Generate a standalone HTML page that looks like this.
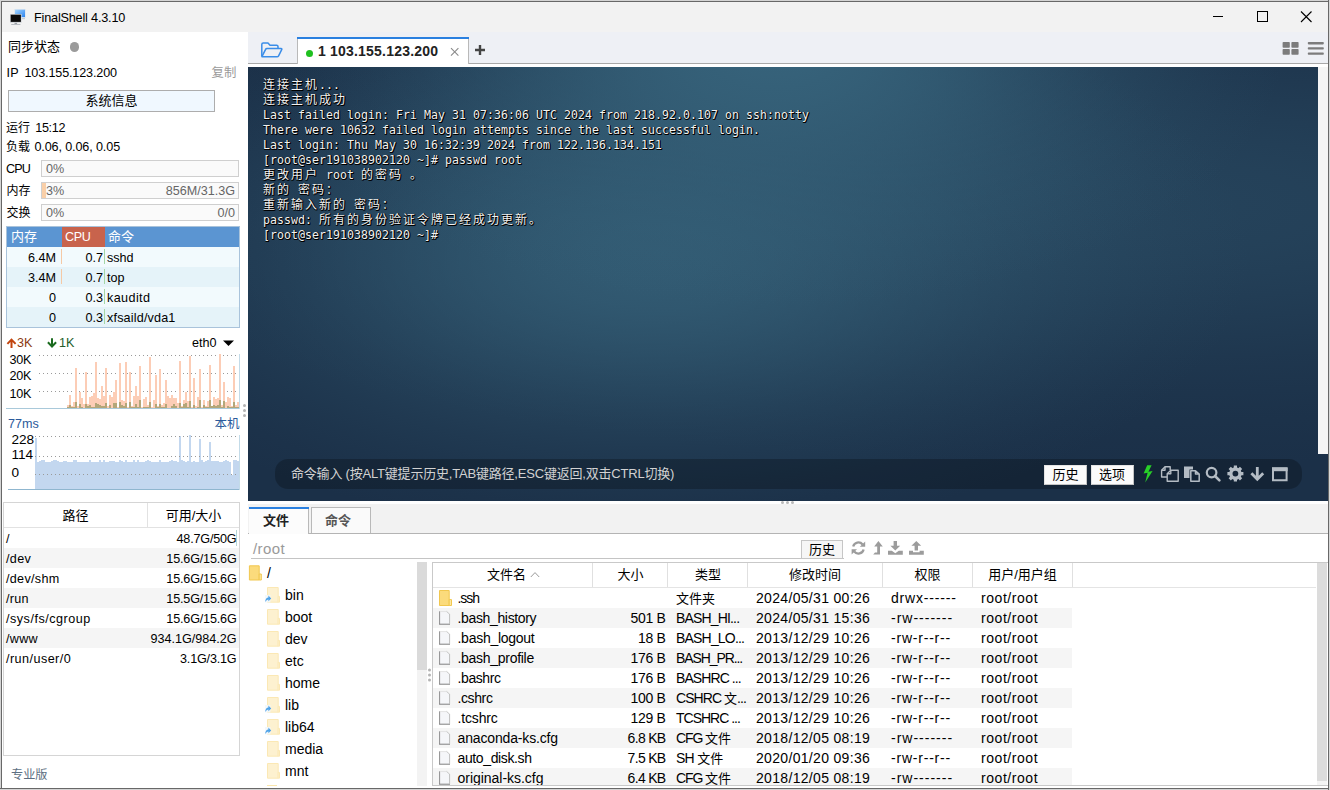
<!DOCTYPE html>
<html lang="zh-CN">
<head>
<meta charset="utf-8">
<title>FinalShell 4.3.10</title>
<style>
*{box-sizing:border-box;margin:0;padding:0}
html,body{width:1330px;height:790px;overflow:hidden;background:#fff}
body{font-family:"Liberation Sans","Noto Sans CJK SC",sans-serif;font-size:13px;color:#000;position:relative}
.a{position:absolute}
.t{position:absolute;white-space:nowrap;height:20px;line-height:20px;font-size:12.6px}
.z{font-size:13px}
.r{text-align:right}
.c{text-align:center}
.g{color:#666}
svg{position:absolute;overflow:visible}
/* frame */
#frame{left:0;top:0;width:1330px;height:790px;background:#d4d4d4}
#frame2{left:1px;top:1px;width:1328px;height:788px;background:#686868}
#win{left:2px;top:2px;width:1326px;height:786px;background:#fff}
#title{left:2px;top:2px;width:1326px;height:30px;background:#f2f2f2}
/* left */
.bar{position:absolute;left:41px;width:198px;height:17px;border:1px solid #cfcfcf;background:#fafafa}
.prow{position:absolute;left:7px;width:232px;height:20px}
.drow{position:absolute;left:4px;width:235px;height:20px}
/* terminal */
#term{left:248px;top:67px;width:1080px;height:434px;background:#21425d;overflow:hidden}
#term{background:#1b3048}
#tbg1{left:0;top:0;width:1080px;height:434px;background:
radial-gradient(ellipse 508px 258px at 528px -17px,rgba(54,98,122,1.000) 0%,rgba(54,98,122,0.973) 10%,rgba(54,98,122,0.896) 20%,rgba(54,98,122,0.780) 30%,rgba(54,98,122,0.641) 40%,rgba(54,98,122,0.494) 50%,rgba(54,98,122,0.353) 60%,rgba(54,98,122,0.231) 70%,rgba(54,98,122,0.131) 80%,rgba(54,98,122,0.054) 90%,rgba(54,98,122,0.000) 100%),
radial-gradient(ellipse 599px 282px at 403px 188px,rgba(54,98,122,0.827) 0%,rgba(54,98,122,0.804) 10%,rgba(54,98,122,0.741) 20%,rgba(54,98,122,0.645) 30%,rgba(54,98,122,0.530) 40%,rgba(54,98,122,0.408) 50%,rgba(54,98,122,0.292) 60%,rgba(54,98,122,0.191) 70%,rgba(54,98,122,0.108) 80%,rgba(54,98,122,0.045) 90%,rgba(54,98,122,0.000) 100%),
radial-gradient(ellipse 1075px 261px at 877px 140px,rgba(54,98,122,0.371) 0%,rgba(54,98,122,0.361) 10%,rgba(54,98,122,0.333) 20%,rgba(54,98,122,0.290) 30%,rgba(54,98,122,0.238) 40%,rgba(54,98,122,0.183) 50%,rgba(54,98,122,0.131) 60%,rgba(54,98,122,0.086) 70%,rgba(54,98,122,0.048) 80%,rgba(54,98,122,0.020) 90%,rgba(54,98,122,0.000) 100%)}
#termtext{left:15px;top:11px;font-family:"DejaVu Sans Mono","Liberation Mono","Noto Sans CJK SC",monospace;font-size:11.63px;line-height:15px;color:#f2f2f2;white-space:pre;text-shadow:1px 1px 0 #000,0 1px 0 #000,1px 0 0 #000}
#termtext .ln{height:15px;line-height:15px}
#termtext .cj{font-family:"Noto Sans CJK SC",sans-serif;font-size:12px;letter-spacing:2px;line-height:0;position:relative;top:0px}
.frow{position:absolute;left:433px;width:639px;height:20px}
.ft{position:absolute;white-space:nowrap;height:20px;line-height:20px;font-size:14px}
.ftp i{font-style:normal;font-size:13px;letter-spacing:0}
#fn0{letter-spacing:-1.02px}
#fn1{letter-spacing:-0.35px}
#fn2{letter-spacing:-0.27px}
#fn3{letter-spacing:-0.29px}
#fn4{letter-spacing:-0.40px}
#fn5{letter-spacing:-0.39px}
#fn6{letter-spacing:-0.15px}
#fn7{letter-spacing:-0.15px}
#fn8{letter-spacing:-0.38px}
#fn9{letter-spacing:-0.03px}
#fs1{letter-spacing:-0.34px}
#fs2{letter-spacing:-0.35px}
#fs3{letter-spacing:-0.34px}
#fs4{letter-spacing:-0.34px}
#fs5{letter-spacing:-0.34px}
#fs6{letter-spacing:-0.34px}
#fs7{letter-spacing:-0.69px}
#fs8{letter-spacing:-0.69px}
#fs9{letter-spacing:-0.69px}
#ftp0{letter-spacing:-0.62px}
#ftp1{letter-spacing:-0.84px}
#ftp2{letter-spacing:-0.81px}
#ftp3{letter-spacing:-1.09px}
#ftp4{letter-spacing:-0.92px}
#ftp5{letter-spacing:-0.94px}
#ftp6{letter-spacing:-1.01px}
#ftp7{letter-spacing:-1.09px}
#ftp8{letter-spacing:-0.72px}
#ftp9{letter-spacing:-1.09px}
#fd0{letter-spacing:0.32px}
#fd1{letter-spacing:0.32px}
#fd2{letter-spacing:0.32px}
#fd3{letter-spacing:0.32px}
#fd4{letter-spacing:0.32px}
#fd5{letter-spacing:0.32px}
#fd6{letter-spacing:0.32px}
#fd7{letter-spacing:0.32px}
#fd8{letter-spacing:0.32px}
#fd9{letter-spacing:0.32px}
#fp0{letter-spacing:0.81px}
#fp1{letter-spacing:1.00px}
#fp2{letter-spacing:0.79px}
#fp3{letter-spacing:0.79px}
#fp4{letter-spacing:0.79px}
#fp5{letter-spacing:0.79px}
#fp6{letter-spacing:0.79px}
#fp7{letter-spacing:1.00px}
#fp8{letter-spacing:0.79px}
#fp9{letter-spacing:1.00px}
#fu0{letter-spacing:0.55px}
#fu1{letter-spacing:0.55px}
#fu2{letter-spacing:0.55px}
#fu3{letter-spacing:0.55px}
#fu4{letter-spacing:0.55px}
#fu5{letter-spacing:0.55px}
#fu6{letter-spacing:0.55px}
#fu7{letter-spacing:0.55px}
#fu8{letter-spacing:0.55px}
#fu9{letter-spacing:0.55px}
.tree{position:absolute;white-space:nowrap;height:22px;line-height:22px;font-size:14px}
</style>
</head>
<body>
<div class="a" id="frame"></div>
<div class="a" id="frame2"></div>
<div class="a" id="win"></div>
<div class="a" id="title"></div>

<!-- TITLE -->
<svg style="left:9px;top:8px" width="18" height="18" viewBox="0 0 18 18">
<defs><linearGradient id="mb" x1="0" y1="0" x2="1" y2="1"><stop offset="0" stop-color="#a5d6ff"/><stop offset="1" stop-color="#2b83ee"/></linearGradient></defs>
<rect x="5.2" y="1" width="11.6" height="8.8" fill="#dfe6ee"/>
<rect x="6" y="1.7" width="10" height="7.4" fill="url(#mb)"/>
<rect x="13" y="10" width="3" height="1.2" fill="#c9ced4"/>
<rect x="1" y="6" width="11.6" height="8.8" fill="#cfd3d8"/>
<rect x="1.7" y="6.7" width="10.2" height="7.2" fill="#0a0a0a"/>
<rect x="5.5" y="14.8" width="2.6" height="1.4" fill="#9aa0a6"/>
<rect x="2.2" y="16" width="9.2" height="1" fill="#b8bcc2"/>
</svg>
<div class="t" id="ttl" style="left:34px;top:7.7px;font-size:12.7px;letter-spacing:-.2px">FinalShell 4.3.10</div>
<svg style="left:1213px;top:10px" width="100" height="14" viewBox="0 0 100 14">
<path d="M0 6.5H10" stroke="#000" stroke-width="1" fill="none"/>
<rect x="44.5" y="1.5" width="10" height="10" stroke="#000" stroke-width="1" fill="none"/>
<path d="M88 1.5L98.5 12M98.5 1.5L88 12" stroke="#000" stroke-width="1.1" fill="none"/>
</svg>

<!-- LEFT -->
<div class="t z" id="l_sync" style="left:8px;top:36.5px">同步状态</div>
<div class="a" style="left:69.7px;top:42.2px;width:9.6px;height:9.6px;border-radius:5px;background:#9b9b9b"></div>
<div class="t" id="l_ip" style="left:6.5px;top:62.5px"><span style="letter-spacing:.3px">IP</span><span style="margin-left:5.4px;letter-spacing:-.13px">103.155.123.200</span></div>
<div class="t z" id="l_copy" style="left:211.5px;top:62.5px;color:#9a9a9a;font-size:12.4px">复制</div>
<div class="a c z" id="l_btn" style="left:8px;top:90px;width:207px;height:22px;border:1px solid #adadad;background:#f0f8ff;line-height:20px">系统信息</div>
<div class="t" id="l_run" style="left:6px;top:118px"><span style="font-size:12px">运行</span><span style="margin-left:5.3px;letter-spacing:-.35px">15:12</span></div>
<div class="t" id="l_load" style="left:6px;top:136.5px"><span style="font-size:12px">负载</span><span style="margin-left:4.4px;letter-spacing:-.12px">0.06, 0.06, 0.05</span></div>
<div class="t" id="l_cpu" style="left:6px;top:158.5px;letter-spacing:-.85px">CPU</div>
<div class="bar" style="top:160px"></div>
<div class="t g" style="left:46px;top:158.5px">0%</div>
<div class="t" id="l_mem" style="left:6.5px;top:180.5px;font-size:12px">内存</div>
<div class="bar" style="top:182px"><div class="a" style="left:0;top:0;width:4px;height:15px;background:#f9cfa8"></div></div>
<div class="t g" style="left:46px;top:180.5px">3%</div>
<div class="t g r" id="l_memv" style="left:135px;width:100px;top:180.5px">856M/31.3G</div>
<div class="t" id="l_swap" style="left:6.5px;top:202.5px;font-size:12px">交换</div>
<div class="bar" style="top:204px"></div>
<div class="t g" style="left:46px;top:202.5px">0%</div>
<div class="t g r" style="left:135px;width:100px;top:202.5px">0/0</div>

<!-- process table -->
<div class="a" style="left:6px;top:226px;width:234px;height:102px;background:#a9c3db"></div>
<div class="prow" style="top:227px;background:#5b95d2"></div>
<div class="a" style="left:62px;top:227px;width:43px;height:20px;background:#c8634c"></div>
<div class="prow" style="top:247px;background:#f2fafd"></div>
<div class="prow" style="top:267px;background:#e5f3f9"></div>
<div class="prow" style="top:287px;background:#f2fafd"></div>
<div class="prow" style="top:307px;background:#e5f3f9"></div>
<div class="t z" style="left:11px;top:227px;color:#fff">内存</div>
<div class="t" style="left:65px;top:227px;color:#fff;letter-spacing:-.4px">CPU</div>
<div class="t z" style="left:108px;top:227px;color:#fff">命令</div>
<div class="a" style="left:61px;top:249px;width:1px;height:15px;background:#f5c9a5"></div>
<div class="a" style="left:61px;top:269px;width:1px;height:15px;background:#f5c9a5"></div>
<div class="a" style="left:104px;top:249px;width:1px;height:15px;background:#a5d6a7"></div><div class="a" style="left:104px;top:269px;width:1px;height:15px;background:#a5d6a7"></div><div class="a" style="left:104px;top:289px;width:1px;height:15px;background:#a5d6a7"></div><div class="a" style="left:104px;top:309px;width:1px;height:15px;background:#a5d6a7"></div>
<div class="t r" style="left:6px;width:50px;top:247.5px">6.4M</div><div class="t r" style="left:53px;width:50px;top:247.5px">0.7</div><div class="t" style="left:107px;top:247.5px">sshd</div>
<div class="t r" style="left:6px;width:50px;top:267.5px">3.4M</div><div class="t r" style="left:53px;width:50px;top:267.5px">0.7</div><div class="t" style="left:107px;top:267.5px">top</div>
<div class="t r" style="left:6px;width:50px;top:287.5px">0</div><div class="t r" style="left:53px;width:50px;top:287.5px">0.3</div><div class="t" style="left:107px;top:287.5px;letter-spacing:.4px">kauditd</div>
<div class="t r" style="left:6px;width:50px;top:307.5px">0</div><div class="t r" style="left:53px;width:50px;top:307.5px">0.3</div><div class="t" id="l_xfs" style="left:107px;top:307.5px;letter-spacing:.17px">xfsaild/vda1</div>

<!-- network -->
<svg style="left:0;top:336px" width="247" height="14" viewBox="0 0 247 14">
<path d="M11.5 2.2L16.3 7.2L14.9 8.6L12.5 6.1V12H10.5V6.1L8.1 8.6L6.7 7.2Z" fill="#c1440e"/>
<path d="M52 12L47.2 7L48.6 5.6L51 8.1V2.2H53V8.1L55.4 5.6L56.8 7Z" fill="#1b6b1f"/>
<path d="M223 4.5H234L228.5 10Z" fill="#000"/>
</svg>
<div class="t" id="l_up" style="left:17px;top:333px;color:#8b3a12">3K</div>
<div class="t" id="l_dn" style="left:59px;top:333px;color:#245c2a">1K</div>
<div class="t" id="l_eth" style="left:192px;top:333px">eth0</div>
<div class="t" id="l_30k" style="left:9.5px;top:350px;letter-spacing:-.3px">30K</div>
<div class="t" style="left:9.5px;top:366px;letter-spacing:-.3px">20K</div>
<div class="t" style="left:9.5px;top:384px;letter-spacing:-.3px">10K</div>
<svg style="left:0;top:350px" width="247" height="62" viewBox="0 0 247 62" shape-rendering="crispEdges">
<line x1="39" y1="5.5" x2="238" y2="5.5" stroke="#9a9a9a" stroke-width="1" stroke-dasharray="1 3"/><line x1="39" y1="23.5" x2="238" y2="23.5" stroke="#9a9a9a" stroke-width="1" stroke-dasharray="1 3"/><line x1="39" y1="41.5" x2="238" y2="41.5" stroke="#9a9a9a" stroke-width="1" stroke-dasharray="1 3"/>
<rect x="67" y="55" width="2" height="4" fill="#fccdb6"/><rect x="69" y="45" width="2" height="14" fill="#fccdb6"/><rect x="71" y="56" width="2" height="3" fill="#fccdb6"/><rect x="73" y="52" width="2" height="7" fill="#fccdb6"/><rect x="75" y="18" width="2" height="41" fill="#fccdb6"/><rect x="77" y="56" width="2" height="3" fill="#fccdb6"/><rect x="79" y="42" width="2" height="17" fill="#fccdb6"/><rect x="81" y="48" width="2" height="11" fill="#fccdb6"/><rect x="83" y="54" width="2" height="5" fill="#fccdb6"/><rect x="85" y="22" width="2" height="37" fill="#fccdb6"/><rect x="87" y="54" width="2" height="5" fill="#fccdb6"/><rect x="89" y="47" width="2" height="12" fill="#fccdb6"/><rect x="91" y="46" width="2" height="13" fill="#fccdb6"/><rect x="93" y="43" width="2" height="16" fill="#fccdb6"/><rect x="95" y="12" width="2" height="47" fill="#fccdb6"/><rect x="97" y="48" width="2" height="11" fill="#fccdb6"/><rect x="99" y="49" width="2" height="10" fill="#fccdb6"/><rect x="101" y="36" width="2" height="23" fill="#fccdb6"/><rect x="103" y="46" width="2" height="13" fill="#fccdb6"/><rect x="105" y="18" width="2" height="41" fill="#fccdb6"/><rect x="107" y="56" width="2" height="3" fill="#fccdb6"/><rect x="109" y="45" width="2" height="14" fill="#fccdb6"/><rect x="111" y="47" width="2" height="12" fill="#fccdb6"/><rect x="113" y="42" width="2" height="17" fill="#fccdb6"/><rect x="115" y="30" width="2" height="29" fill="#fccdb6"/><rect x="117" y="57" width="2" height="2" fill="#fccdb6"/><rect x="119" y="13" width="2" height="46" fill="#fccdb6"/><rect x="121" y="50" width="2" height="9" fill="#fccdb6"/><rect x="123" y="51" width="2" height="8" fill="#fccdb6"/><rect x="125" y="12" width="2" height="47" fill="#fccdb6"/><rect x="127" y="57" width="2" height="2" fill="#fccdb6"/><rect x="129" y="22" width="2" height="37" fill="#fccdb6"/><rect x="131" y="56" width="2" height="3" fill="#fccdb6"/><rect x="133" y="46" width="2" height="13" fill="#fccdb6"/><rect x="135" y="36" width="2" height="23" fill="#fccdb6"/><rect x="137" y="46" width="2" height="13" fill="#fccdb6"/><rect x="139" y="16" width="2" height="43" fill="#fccdb6"/><rect x="141" y="57" width="2" height="2" fill="#fccdb6"/><rect x="143" y="49" width="2" height="10" fill="#fccdb6"/><rect x="145" y="47" width="2" height="12" fill="#fccdb6"/><rect x="147" y="55" width="2" height="4" fill="#fccdb6"/><rect x="149" y="7" width="2" height="52" fill="#fccdb6"/><rect x="151" y="57" width="2" height="2" fill="#fccdb6"/><rect x="153" y="50" width="2" height="9" fill="#fccdb6"/><rect x="155" y="25" width="2" height="34" fill="#fccdb6"/><rect x="157" y="56" width="2" height="3" fill="#fccdb6"/><rect x="159" y="19" width="2" height="40" fill="#fccdb6"/><rect x="161" y="55" width="2" height="4" fill="#fccdb6"/><rect x="163" y="53" width="2" height="6" fill="#fccdb6"/><rect x="165" y="30" width="2" height="29" fill="#fccdb6"/><rect x="167" y="46" width="2" height="13" fill="#fccdb6"/><rect x="169" y="48" width="2" height="11" fill="#fccdb6"/><rect x="171" y="45" width="2" height="14" fill="#fccdb6"/><rect x="173" y="48" width="2" height="11" fill="#fccdb6"/><rect x="175" y="48" width="2" height="11" fill="#fccdb6"/><rect x="177" y="53" width="2" height="6" fill="#fccdb6"/><rect x="179" y="11" width="2" height="48" fill="#fccdb6"/><rect x="181" y="56" width="2" height="3" fill="#fccdb6"/><rect x="183" y="50" width="2" height="9" fill="#fccdb6"/><rect x="185" y="42" width="2" height="17" fill="#fccdb6"/><rect x="187" y="51" width="2" height="8" fill="#fccdb6"/><rect x="189" y="6" width="2" height="53" fill="#fccdb6"/><rect x="191" y="57" width="2" height="2" fill="#fccdb6"/><rect x="193" y="28" width="2" height="31" fill="#fccdb6"/><rect x="195" y="56" width="2" height="3" fill="#fccdb6"/><rect x="197" y="47" width="2" height="12" fill="#fccdb6"/><rect x="199" y="19" width="2" height="40" fill="#fccdb6"/><rect x="201" y="57" width="2" height="2" fill="#fccdb6"/><rect x="203" y="50" width="2" height="9" fill="#fccdb6"/><rect x="205" y="56" width="2" height="3" fill="#fccdb6"/><rect x="207" y="51" width="2" height="8" fill="#fccdb6"/><rect x="209" y="15" width="2" height="44" fill="#fccdb6"/><rect x="211" y="56" width="2" height="3" fill="#fccdb6"/><rect x="213" y="47" width="2" height="12" fill="#fccdb6"/><rect x="215" y="49" width="2" height="10" fill="#fccdb6"/><rect x="217" y="48" width="2" height="11" fill="#fccdb6"/><rect x="219" y="4" width="2" height="55" fill="#fccdb6"/><rect x="221" y="55" width="2" height="4" fill="#fccdb6"/><rect x="223" y="32" width="2" height="27" fill="#fccdb6"/><rect x="225" y="52" width="2" height="7" fill="#fccdb6"/><rect x="227" y="47" width="2" height="12" fill="#fccdb6"/><rect x="229" y="48" width="2" height="11" fill="#fccdb6"/><rect x="231" y="56" width="2" height="3" fill="#fccdb6"/><rect x="233" y="16" width="2" height="43" fill="#fccdb6"/><rect x="235" y="55" width="2" height="4" fill="#fccdb6"/><rect x="237" y="52" width="2" height="7" fill="#fccdb6"/><rect x="67" y="57" width="2" height="2" fill="#b3a679"/><rect x="69" y="55" width="2" height="4" fill="#b3a679"/><rect x="71" y="57" width="2" height="2" fill="#b3a679"/><rect x="73" y="57" width="2" height="2" fill="#b3a679"/><rect x="75" y="52" width="2" height="7" fill="#b3a679"/><rect x="77" y="58" width="2" height="1" fill="#b3a679"/><rect x="79" y="54" width="2" height="5" fill="#b3a679"/><rect x="81" y="57" width="2" height="2" fill="#b3a679"/><rect x="83" y="58" width="2" height="1" fill="#b3a679"/><rect x="85" y="54" width="2" height="5" fill="#b3a679"/><rect x="87" y="56" width="2" height="3" fill="#b3a679"/><rect x="89" y="55" width="2" height="4" fill="#b3a679"/><rect x="91" y="57" width="2" height="2" fill="#b3a679"/><rect x="93" y="57" width="2" height="2" fill="#b3a679"/><rect x="95" y="53" width="2" height="6" fill="#b3a679"/><rect x="97" y="54" width="2" height="5" fill="#b3a679"/><rect x="99" y="55" width="2" height="4" fill="#b3a679"/><rect x="101" y="56" width="2" height="3" fill="#b3a679"/><rect x="103" y="56" width="2" height="3" fill="#b3a679"/><rect x="105" y="53" width="2" height="6" fill="#b3a679"/><rect x="107" y="58" width="2" height="1" fill="#b3a679"/><rect x="109" y="55" width="2" height="4" fill="#b3a679"/><rect x="111" y="58" width="2" height="1" fill="#b3a679"/><rect x="113" y="53" width="2" height="6" fill="#b3a679"/><rect x="115" y="53" width="2" height="6" fill="#b3a679"/><rect x="117" y="58" width="2" height="1" fill="#b3a679"/><rect x="119" y="52" width="2" height="7" fill="#b3a679"/><rect x="121" y="55" width="2" height="4" fill="#b3a679"/><rect x="123" y="56" width="2" height="3" fill="#b3a679"/><rect x="125" y="53" width="2" height="6" fill="#b3a679"/><rect x="127" y="58" width="2" height="1" fill="#b3a679"/><rect x="129" y="52" width="2" height="7" fill="#b3a679"/><rect x="131" y="57" width="2" height="2" fill="#b3a679"/><rect x="133" y="57" width="2" height="2" fill="#b3a679"/><rect x="135" y="54" width="2" height="5" fill="#b3a679"/><rect x="137" y="57" width="2" height="2" fill="#b3a679"/><rect x="139" y="50" width="2" height="9" fill="#b3a679"/><rect x="141" y="58" width="2" height="1" fill="#b3a679"/><rect x="143" y="57" width="2" height="2" fill="#b3a679"/><rect x="145" y="57" width="2" height="2" fill="#b3a679"/><rect x="147" y="57" width="2" height="2" fill="#b3a679"/><rect x="149" y="52" width="2" height="7" fill="#b3a679"/><rect x="151" y="58" width="2" height="1" fill="#b3a679"/><rect x="153" y="58" width="2" height="1" fill="#b3a679"/><rect x="155" y="54" width="2" height="5" fill="#b3a679"/><rect x="157" y="57" width="2" height="2" fill="#b3a679"/><rect x="159" y="54" width="2" height="5" fill="#b3a679"/><rect x="161" y="57" width="2" height="2" fill="#b3a679"/><rect x="163" y="57" width="2" height="2" fill="#b3a679"/><rect x="165" y="54" width="2" height="5" fill="#b3a679"/><rect x="167" y="58" width="2" height="1" fill="#b3a679"/><rect x="169" y="58" width="2" height="1" fill="#b3a679"/><rect x="171" y="56" width="2" height="3" fill="#b3a679"/><rect x="173" y="54" width="2" height="5" fill="#b3a679"/><rect x="175" y="56" width="2" height="3" fill="#b3a679"/><rect x="177" y="58" width="2" height="1" fill="#b3a679"/><rect x="179" y="53" width="2" height="6" fill="#b3a679"/><rect x="181" y="57" width="2" height="2" fill="#b3a679"/><rect x="183" y="54" width="2" height="5" fill="#b3a679"/><rect x="185" y="53" width="2" height="6" fill="#b3a679"/><rect x="187" y="57" width="2" height="2" fill="#b3a679"/><rect x="189" y="51" width="2" height="8" fill="#b3a679"/><rect x="191" y="58" width="2" height="1" fill="#b3a679"/><rect x="193" y="55" width="2" height="4" fill="#b3a679"/><rect x="195" y="58" width="2" height="1" fill="#b3a679"/><rect x="197" y="57" width="2" height="2" fill="#b3a679"/><rect x="199" y="50" width="2" height="9" fill="#b3a679"/><rect x="201" y="58" width="2" height="1" fill="#b3a679"/><rect x="203" y="55" width="2" height="4" fill="#b3a679"/><rect x="205" y="57" width="2" height="2" fill="#b3a679"/><rect x="207" y="57" width="2" height="2" fill="#b3a679"/><rect x="209" y="50" width="2" height="9" fill="#b3a679"/><rect x="211" y="56" width="2" height="3" fill="#b3a679"/><rect x="213" y="55" width="2" height="4" fill="#b3a679"/><rect x="215" y="56" width="2" height="3" fill="#b3a679"/><rect x="217" y="55" width="2" height="4" fill="#b3a679"/><rect x="219" y="50" width="2" height="9" fill="#b3a679"/><rect x="221" y="57" width="2" height="2" fill="#b3a679"/><rect x="223" y="51" width="2" height="8" fill="#b3a679"/><rect x="225" y="58" width="2" height="1" fill="#b3a679"/><rect x="227" y="56" width="2" height="3" fill="#b3a679"/><rect x="229" y="57" width="2" height="2" fill="#b3a679"/><rect x="231" y="57" width="2" height="2" fill="#b3a679"/><rect x="233" y="52" width="2" height="7" fill="#b3a679"/><rect x="235" y="57" width="2" height="2" fill="#b3a679"/><rect x="237" y="57" width="2" height="2" fill="#b3a679"/>
<rect x="6" y="58" width="234" height="1" fill="#a9c9da"/>
<rect x="239" y="4" width="1" height="55" fill="#c3dbe8"/>
</svg>

<!-- ping -->
<div class="t" id="l_ms" style="left:8px;top:414px;color:#2b5a9b">77ms</div>
<div class="t z" id="l_local" style="left:214.5px;top:414px;color:#2b5a9b;font-size:12.5px">本机</div>
<div class="t" id="l_228" style="left:11.4px;top:430.2px;font-size:13.6px">228</div>
<div class="t" style="left:11.4px;top:445.2px;font-size:13.6px">114</div>
<div class="t" style="left:11.6px;top:463.2px;font-size:13.6px">0</div>
<svg style="left:0;top:430px" width="247" height="62" viewBox="0 0 247 62" shape-rendering="crispEdges">
<g fill="#c3d7ef"><rect x="35" y="8" width="2" height="51"/><rect x="37" y="32" width="2" height="27"/><rect x="39" y="31" width="2" height="28"/><rect x="41" y="30" width="2" height="29"/><rect x="43" y="30" width="2" height="29"/><rect x="45" y="32" width="2" height="27"/><rect x="47" y="32" width="2" height="27"/><rect x="49" y="32" width="2" height="27"/><rect x="51" y="31" width="2" height="28"/><rect x="53" y="30" width="2" height="29"/><rect x="55" y="30" width="2" height="29"/><rect x="57" y="31" width="2" height="28"/><rect x="59" y="32" width="2" height="27"/><rect x="61" y="32" width="2" height="27"/><rect x="63" y="31" width="2" height="28"/><rect x="65" y="31" width="2" height="28"/><rect x="67" y="32" width="2" height="27"/><rect x="69" y="32" width="2" height="27"/><rect x="71" y="32" width="2" height="27"/><rect x="73" y="30" width="2" height="29"/><rect x="75" y="30" width="2" height="29"/><rect x="77" y="32" width="2" height="27"/><rect x="79" y="32" width="2" height="27"/><rect x="81" y="32" width="2" height="27"/><rect x="83" y="32" width="2" height="27"/><rect x="85" y="32" width="2" height="27"/><rect x="87" y="32" width="2" height="27"/><rect x="89" y="30" width="2" height="29"/><rect x="91" y="32" width="2" height="27"/><rect x="93" y="32" width="2" height="27"/><rect x="95" y="32" width="2" height="27"/><rect x="97" y="32" width="2" height="27"/><rect x="99" y="30" width="2" height="29"/><rect x="101" y="32" width="2" height="27"/><rect x="103" y="30" width="2" height="29"/><rect x="105" y="32" width="2" height="27"/><rect x="107" y="32" width="2" height="27"/><rect x="109" y="31" width="2" height="28"/><rect x="111" y="31" width="2" height="28"/><rect x="113" y="31" width="2" height="28"/><rect x="115" y="32" width="2" height="27"/><rect x="117" y="32" width="2" height="27"/><rect x="119" y="30" width="2" height="29"/><rect x="121" y="31" width="2" height="28"/><rect x="123" y="32" width="2" height="27"/><rect x="125" y="30" width="2" height="29"/><rect x="127" y="32" width="2" height="27"/><rect x="129" y="32" width="2" height="27"/><rect x="131" y="32" width="2" height="27"/><rect x="133" y="30" width="2" height="29"/><rect x="135" y="32" width="2" height="27"/><rect x="137" y="30" width="2" height="29"/><rect x="139" y="32" width="2" height="27"/><rect x="141" y="32" width="2" height="27"/><rect x="143" y="32" width="2" height="27"/><rect x="145" y="31" width="2" height="28"/><rect x="147" y="30" width="2" height="29"/><rect x="149" y="31" width="2" height="28"/><rect x="151" y="32" width="2" height="27"/><rect x="153" y="32" width="2" height="27"/><rect x="155" y="32" width="2" height="27"/><rect x="157" y="32" width="2" height="27"/><rect x="159" y="30" width="2" height="29"/><rect x="161" y="32" width="2" height="27"/><rect x="163" y="32" width="2" height="27"/><rect x="165" y="32" width="2" height="27"/><rect x="167" y="32" width="2" height="27"/><rect x="169" y="31" width="2" height="28"/><rect x="171" y="30" width="2" height="29"/><rect x="173" y="31" width="2" height="28"/><rect x="175" y="31" width="2" height="28"/><rect x="177" y="32" width="2" height="27"/><rect x="179" y="6" width="2" height="53"/><rect x="181" y="30" width="2" height="29"/><rect x="183" y="31" width="2" height="28"/><rect x="185" y="32" width="2" height="27"/><rect x="187" y="31" width="2" height="28"/><rect x="189" y="5" width="2" height="54"/><rect x="191" y="32" width="2" height="27"/><rect x="193" y="31" width="2" height="28"/><rect x="195" y="32" width="2" height="27"/><rect x="197" y="32" width="2" height="27"/><rect x="199" y="9" width="2" height="50"/><rect x="201" y="30" width="2" height="29"/><rect x="203" y="32" width="2" height="27"/><rect x="205" y="31" width="2" height="28"/><rect x="207" y="30" width="2" height="29"/><rect x="209" y="12" width="2" height="47"/><rect x="211" y="31" width="2" height="28"/><rect x="213" y="31" width="2" height="28"/><rect x="215" y="31" width="2" height="28"/><rect x="217" y="31" width="2" height="28"/><rect x="219" y="32" width="2" height="27"/><rect x="221" y="32" width="2" height="27"/><rect x="223" y="31" width="2" height="28"/><rect x="225" y="30" width="2" height="29"/><rect x="227" y="31" width="2" height="28"/><rect x="229" y="32" width="2" height="27"/><rect x="231" y="45" width="2" height="14"/><rect x="233" y="30" width="2" height="29"/><rect x="235" y="30" width="2" height="29"/><rect x="237" y="31" width="2" height="28"/></g>
<line x1="35" y1="6.5" x2="238" y2="6.5" stroke="#9a9a9a" stroke-width="1" stroke-dasharray="1 3"/><line x1="35" y1="26.5" x2="238" y2="26.5" stroke="#9a9a9a" stroke-width="1" stroke-dasharray="1 3"/><line x1="35" y1="44.5" x2="238" y2="44.5" stroke="#9a9a9a" stroke-width="1" stroke-dasharray="1 3"/>
<rect x="8" y="59" width="232" height="1" fill="#8fb6cf"/>
<rect x="239" y="5" width="1" height="55" fill="#c3dbe8"/>
</svg>

<!-- disk table -->
<div class="a" style="left:3px;top:502px;width:237px;height:254px;border:1px solid #d5d5d5;background:#fff"></div>
<div class="a" style="left:4px;top:527px;width:235px;height:1px;background:#e2e2e2"></div>
<div class="a" style="left:147px;top:503px;width:1px;height:24px;background:#e2e2e2"></div>
<div class="t c z" style="left:4px;width:143px;top:505.5px">路径</div>
<div class="t c z" style="left:148px;width:91px;top:505.5px">可用/大小</div>
<div class="drow" style="top:548px;background:#f5f5f5"></div>
<div class="drow" style="top:588px;background:#f5f5f5"></div>
<div class="drow" style="top:628px;background:#f5f5f5"></div>
<div class="a" style="left:236px;top:530px;width:1px;height:16px;background:#b5d5d5"></div>
<div class="t" style="left:6px;top:528.5px">/</div><div class="t r" style="left:100px;width:136.5px;letter-spacing:-.18px;top:528.5px">48.7G/50G</div>
<div class="t" style="left:6px;top:548.5px;letter-spacing:.35px">/dev</div><div class="t r" style="left:100px;width:136.5px;letter-spacing:-.18px;top:548.5px">15.6G/15.6G</div>
<div class="t" style="left:6px;top:568.5px;letter-spacing:.3px">/dev/shm</div><div class="t r" style="left:100px;width:136.5px;letter-spacing:-.18px;top:568.5px">15.6G/15.6G</div>
<div class="t" style="left:6px;top:588.5px;letter-spacing:.3px">/run</div><div class="t r" style="left:100px;width:136.5px;letter-spacing:-.18px;top:588.5px">15.5G/15.6G</div>
<div class="t" id="l_cg" style="left:6px;top:608.5px;letter-spacing:.5px">/sys/fs/cgroup</div><div class="t r" style="left:100px;width:136.5px;letter-spacing:-.18px;top:608.5px">15.6G/15.6G</div>
<div class="t" style="left:6px;top:628.5px;letter-spacing:.3px">/www</div><div class="t r" id="l_www" style="left:100px;width:136.5px;top:628.5px">934.1G/984.2G</div>
<div class="t" style="left:6px;top:648.5px;letter-spacing:.45px">/run/user/0</div><div class="t r" style="left:100px;width:136.5px;letter-spacing:-.18px;top:648.5px">3.1G/3.1G</div>
<div class="t" id="l_pro" style="left:11px;top:765px;color:#5d6f82;font-size:12.2px">专业版</div>

<!-- TABS -->
<div class="a" style="left:248px;top:32px;width:1080px;height:31px;background:#eef0f5"></div>
<div class="a" style="left:248px;top:63px;width:1080px;height:1px;background:#a8a8a8"></div>
<div class="a" style="left:297px;top:37px;width:172px;height:27px;background:#fff;border-left:1px solid #b9b9b9;border-right:1px solid #b9b9b9"></div>
<div class="a" style="left:297px;top:37px;width:172px;height:2px;background:#2a80e0"></div>
<svg style="left:260px;top:41px" width="24" height="18" viewBox="0 0 24 18">
<path d="M1.8 15.2V3.4Q1.8 2 3.2 2H8L10 4.2H16.6Q18 4.2 18 5.6V7.4" fill="none" stroke="#3a8de8" stroke-width="1.5" stroke-linejoin="round"/>
<path d="M1.9 15.6L5.6 8.4Q6 7.5 7 7.5H21Q22.3 7.5 21.7 8.7L18.6 14.8Q18.1 15.8 17 15.8H2.2Z" fill="none" stroke="#3a8de8" stroke-width="1.5" stroke-linejoin="round"/>
</svg>
<div class="a" style="left:306px;top:50px;width:7px;height:7px;border-radius:4px;background:#1fc01f"></div>
<div class="t" id="tabtxt" style="left:318px;top:41px;font-weight:bold;font-size:14px;letter-spacing:.2px;color:#222">1 103.155.123.200</div>
<svg style="left:450px;top:47px" width="10" height="10" viewBox="0 0 10 10"><path d="M1 1.2L8.4 8.6M8.4 1.2L1 8.6" stroke="#8a8a8a" stroke-width="1.1" fill="none"/></svg>
<svg style="left:474px;top:44px" width="12" height="12" viewBox="0 0 12 12"><path d="M6 1V11M1 6H11" stroke="#444" stroke-width="2.4" fill="none"/></svg>
<svg style="left:1282px;top:41px" width="44" height="15" viewBox="0 0 44 15">
<g fill="#7c7c7c"><rect x="0.6" y="0.9" width="7.2" height="5.8" rx="0.8"/><rect x="9.4" y="0.9" width="7.2" height="5.8" rx="0.8"/><rect x="0.6" y="8" width="7.2" height="5.8" rx="0.8"/><rect x="9.4" y="8" width="7.2" height="5.8" rx="0.8"/>
<rect x="25.8" y="1" width="16" height="2.4" rx="0.8"/><rect x="25.8" y="6.2" width="16" height="2.4" rx="0.8"/><rect x="25.8" y="11.4" width="16" height="2.4" rx="0.8"/></g>
</svg>

<!-- TERMINAL -->
<div class="a" id="term">
<div class="a" id="tbg1"></div>
<div class="a" id="termtext"><div class="ln"><span class="cj">连接主机</span>...</div><div class="ln"><span class="cj">连接主机成功</span></div><div class="ln">Last failed login: Fri May 31 07:36:06 UTC 2024 from 218.92.0.107 on ssh:notty</div><div class="ln">There were 10632 failed login attempts since the last successful login.</div><div class="ln">Last login: Thu May 30 16:32:39 2024 from 122.136.134.151</div><div class="ln">[root@ser191038902120 ~]# passwd root</div><div class="ln"><span class="cj">更改用户</span> root <span class="cj">的密码</span> <span class="cj">。</span></div><div class="ln"><span class="cj">新的</span> <span class="cj">密码：</span></div><div class="ln"><span class="cj">重新输入新的</span> <span class="cj">密码：</span></div><div class="ln">passwd: <span class="cj">所有的身份验证令牌已经成功更新。</span></div><div class="ln">[root@ser191038902120 ~]# </div></div>
<div class="a" style="left:1070px;top:0;width:10px;height:387px;background:#f5f5f5"></div>
<div class="a" id="cmdbar" style="left:27px;top:392px;width:1027px;height:30px;border-radius:13px;background:rgba(0,0,0,.24)"></div>
<div class="t z" id="cmdtxt" style="left:43px;top:397px;color:#d2d2d2;letter-spacing:-.2px">命令输入 (按ALT键提示历史,TAB键路径,ESC键返回,双击CTRL切换)</div>
<div class="a c" style="left:796px;top:397.5px;width:43px;height:20px;background:#fbfbfb;border:1px solid #e4e4e4;border-right-color:#c4c4c4;border-bottom-color:#c4c4c4;line-height:18px;font-size:13px">历史</div>
<div class="a c" style="left:842.5px;top:397.5px;width:43px;height:20px;background:#fbfbfb;border:1px solid #e4e4e4;border-right-color:#c4c4c4;border-bottom-color:#c4c4c4;line-height:18px;font-size:13px">选项</div>
<svg style="left:894px;top:397px" width="150" height="20" viewBox="0 0 150 20">
<path d="M5.2 1.2L1.6 9.6L5.6 8.8L3.2 18.6L10.6 7L6.4 7.8L9.6 1.2Z" fill="#28d028"/>
<g fill="none" stroke="#b4bcc4" stroke-width="1.4" stroke-linejoin="round">
<path d="M28.2 6V2.8H23L19.6 6.2V13H25"/><path d="M23 2.8V6.2H19.6"/>
<path d="M25.2 9.8L28.8 6.2H36.2V17.2H25.2Z"/><path d="M28.8 6.2V9.8H25.2"/>
</g>
<g fill="#b4bcc4">
<path d="M42 2.5H51V5.5H47.5V14H42Z"/>
</g>
<path d="M48.8 6.8H53.5L57.2 10V17.2H48.8ZM53.5 6.8V10H57.2" fill="none" stroke="#b4bcc4" stroke-width="1.5" stroke-linejoin="round"/>
<circle cx="69.6" cy="8.6" r="4.8" fill="none" stroke="#b4bcc4" stroke-width="2.2"/>
<path d="M73 12L77.4 16.4" stroke="#b4bcc4" stroke-width="2.6" stroke-linecap="round"/>
<g transform="translate(93.4,9.6)">
<circle r="4.6" fill="none" stroke="#b4bcc4" stroke-width="3.4"/>
<g stroke="#b4bcc4" stroke-width="3.2"><path d="M0 -8V-5M0 8V5M-8 0H-5M8 0H5M-5.66 -5.66L-3.6 -3.6M5.66 5.66L3.6 3.6M-5.66 5.66L-3.6 3.6M5.66 -5.66L3.6 -3.6"/></g>
</g>
<path d="M115.3 3V14M109.4 9.2L115.3 15.2L121.2 9.2" fill="none" stroke="#b4bcc4" stroke-width="2.8"/>
<path d="M131 4.8H144.6V16.2H131Z" fill="none" stroke="#b4bcc4" stroke-width="2"/>
<rect x="130" y="3.2" width="15.6" height="4" fill="#b4bcc4"/>
</svg>
</div>
<div class="a" style="left:248px;top:64px;width:1080px;height:3px;background:#fff"></div>

<!-- BOTTOM -->
<div class="a" style="left:248px;top:501px;width:1080px;height:33px;background:#f2f2f2"></div>
<div class="a" style="left:248px;top:533px;width:1080px;height:1px;background:#b4b4b4"></div>
<div class="a" style="left:249px;top:507px;width:60px;height:27px;background:#fcfcfc;border-right:1px solid #b9b9b9"></div>
<div class="a" style="left:249px;top:507px;width:60px;height:2px;background:#2a80e0"></div>
<div class="a" style="left:311px;top:507px;width:60px;height:26px;background:#fafafa;border:1px solid #b9b9b9;border-bottom:none"></div>
<div class="t z" style="left:263px;top:511px;font-weight:bold;color:#222">文件</div>
<div class="t z" style="left:325px;top:511px;font-weight:bold;color:#555">命令</div>
<div class="a" style="left:248px;top:501px;width:1080px;height:3px;background:#fff"></div><svg style="left:781px;top:501px" width="14" height="3" viewBox="0 0 14 3"><g fill="#b8b8b8"><circle cx="1.5" cy="1.5" r="1.5"/><circle cx="6.5" cy="1.5" r="1.5"/><circle cx="11.5" cy="1.5" r="1.5"/></g></svg>
<div class="t" id="b_root" style="left:253px;top:538.5px;color:#9a9a9a;font-size:15px;letter-spacing:.4px">/root</div>
<div class="a" style="left:251px;top:558px;width:593px;height:1px;background:#c4c4c4"></div>
<div class="a c" style="left:801px;top:539.5px;width:42px;height:19px;background:#f6f6f6;border:1px solid #c6c6c6;line-height:17px">历史</div>
<svg style="left:851px;top:540px" width="78" height="16" viewBox="0 0 78 16">
<g fill="none" stroke="#9c9c9c" stroke-width="2.3">
<path d="M2.2 6.6A5.4 5.4 0 0 1 11.6 4.4"/><path d="M12.6 9.4A5.4 5.4 0 0 1 3.2 11.6"/>
</g>
<g fill="#9c9c9c"><path d="M14.2 1.4V6.8H8.8Z"/><path d="M0.6 14.6V9.2H6Z"/>
<path d="M27.4 1L31.8 6.6H29V14.6H22.2L24 12.4H26.2V6.6H23.2Z"/>
<path d="M42.6 1H46V5.8H49.2L44.3 10.6L39.4 5.8H42.6Z"/><path d="M37 10.8H40.8L44.3 13.2L47.8 10.8H51.8V14.8H37Z"/>
<path d="M63.6 10.4H67V5.8H70.2L65.3 1L60.4 5.8H63.6Z"/><path d="M58 10.8H62V12.2H68.6V10.8H72.8V14.8H58Z"/>
</g>
</svg>
<!-- tree -->
<svg style="left:249px;top:565px" width="13" height="16" viewBox="0 0 13 16"><path d="M0.4 0.8H10.2V15H0.4Z" fill="#fbdb7c" stroke="#f1c74f"/><path d="M10.2 9H12.3V15H10.2Z" fill="#fde9a4" stroke="#f1c74f"/></svg>
<div class="tree" style="left:267px;top:562px">/</div>
<svg style="left:267px;top:587.4px" width="13" height="16" viewBox="0 0 13 16"><path d="M0.5 0.5H11.2V15.2H0.5Z" fill="#fdf1d0" stroke="#fbe8b4"/><path d="M11.2 9.4H12.5V15.2H11.2Z" fill="#fef6df" stroke="#fbe8b4"/><rect x="-2" y="8" width="5.4" height="7.4" fill="#f2f7fc" opacity=".9"/><path d="M-1.7 15.2C-1.9 12 -0.4 10.4 1.4 10.4V8.6L4.2 11.4L1.4 14.2V12.6C0.2 12.6 -0.9 13.4 -1.7 15.2Z" fill="#4da2e8"/></svg>
<div class="tree" style="left:285px;top:584px">bin</div>
<svg style="left:267px;top:609.4px" width="13" height="16" viewBox="0 0 13 16"><path d="M0.5 0.5H11.2V15.2H0.5Z" fill="#fdf1d0" stroke="#fbe8b4"/><path d="M11.2 9.4H12.5V15.2H11.2Z" fill="#fef6df" stroke="#fbe8b4"/></svg>
<div class="tree" style="left:285px;top:606px">boot</div>
<svg style="left:267px;top:631.4px" width="13" height="16" viewBox="0 0 13 16"><path d="M0.5 0.5H11.2V15.2H0.5Z" fill="#fdf1d0" stroke="#fbe8b4"/><path d="M11.2 9.4H12.5V15.2H11.2Z" fill="#fef6df" stroke="#fbe8b4"/></svg>
<div class="tree" style="left:285px;top:628px">dev</div>
<svg style="left:267px;top:653.4px" width="13" height="16" viewBox="0 0 13 16"><path d="M0.5 0.5H11.2V15.2H0.5Z" fill="#fdf1d0" stroke="#fbe8b4"/><path d="M11.2 9.4H12.5V15.2H11.2Z" fill="#fef6df" stroke="#fbe8b4"/></svg>
<div class="tree" style="left:285px;top:650px">etc</div>
<svg style="left:267px;top:675.4px" width="13" height="16" viewBox="0 0 13 16"><path d="M0.5 0.5H11.2V15.2H0.5Z" fill="#fdf1d0" stroke="#fbe8b4"/><path d="M11.2 9.4H12.5V15.2H11.2Z" fill="#fef6df" stroke="#fbe8b4"/></svg>
<div class="tree" style="left:285px;top:672px">home</div>
<svg style="left:267px;top:697.4px" width="13" height="16" viewBox="0 0 13 16"><path d="M0.5 0.5H11.2V15.2H0.5Z" fill="#fdf1d0" stroke="#fbe8b4"/><path d="M11.2 9.4H12.5V15.2H11.2Z" fill="#fef6df" stroke="#fbe8b4"/><rect x="-2" y="8" width="5.4" height="7.4" fill="#f2f7fc" opacity=".9"/><path d="M-1.7 15.2C-1.9 12 -0.4 10.4 1.4 10.4V8.6L4.2 11.4L1.4 14.2V12.6C0.2 12.6 -0.9 13.4 -1.7 15.2Z" fill="#4da2e8"/></svg>
<div class="tree" style="left:285px;top:694px">lib</div>
<svg style="left:267px;top:719.4px" width="13" height="16" viewBox="0 0 13 16"><path d="M0.5 0.5H11.2V15.2H0.5Z" fill="#fdf1d0" stroke="#fbe8b4"/><path d="M11.2 9.4H12.5V15.2H11.2Z" fill="#fef6df" stroke="#fbe8b4"/><rect x="-2" y="8" width="5.4" height="7.4" fill="#f2f7fc" opacity=".9"/><path d="M-1.7 15.2C-1.9 12 -0.4 10.4 1.4 10.4V8.6L4.2 11.4L1.4 14.2V12.6C0.2 12.6 -0.9 13.4 -1.7 15.2Z" fill="#4da2e8"/></svg>
<div class="tree" style="left:285px;top:716px">lib64</div>
<svg style="left:267px;top:741.4px" width="13" height="16" viewBox="0 0 13 16"><path d="M0.5 0.5H11.2V15.2H0.5Z" fill="#fdf1d0" stroke="#fbe8b4"/><path d="M11.2 9.4H12.5V15.2H11.2Z" fill="#fef6df" stroke="#fbe8b4"/></svg>
<div class="tree" style="left:285px;top:738px">media</div>
<svg style="left:267px;top:763.4px" width="13" height="16" viewBox="0 0 13 16"><path d="M0.5 0.5H11.2V15.2H0.5Z" fill="#fdf1d0" stroke="#fbe8b4"/><path d="M11.2 9.4H12.5V15.2H11.2Z" fill="#fef6df" stroke="#fbe8b4"/></svg>
<div class="tree" style="left:285px;top:760px">mnt</div>
<svg style="left:267px;top:785px" width="13" height="3" viewBox="0 0 13 3"><rect x="0.5" y="0.5" width="9" height="3" fill="#fdf0c8" stroke="#fae6ad"/></svg>
<div class="a" style="left:417px;top:562px;width:10px;height:226px;background:#f3f3f3"></div>
<div class="a" style="left:417px;top:562px;width:10px;height:108px;background:#dadada"></div>
<svg style="left:428px;top:668px" width="3" height="14" viewBox="0 0 3 14"><g fill="#b4b4b4"><circle cx="1.5" cy="1.9" r="1.5"/><circle cx="1.5" cy="6.9" r="1.5"/><circle cx="1.5" cy="11.9" r="1.5"/></g></svg>
<!-- file table -->
<div class="a" style="left:432px;top:562px;width:896px;height:224px;border:1px solid #c9c9c9;border-right:none;background:#fff"></div>
<div class="a" style="left:433px;top:587px;width:883px;height:1px;background:#e4e4e4"></div>
<div class="a" style="left:592px;top:563px;width:1px;height:24px;background:#e0e0e0"></div>
<div class="a" style="left:667px;top:563px;width:1px;height:24px;background:#e0e0e0"></div>
<div class="a" style="left:747px;top:563px;width:1px;height:24px;background:#e0e0e0"></div>
<div class="a" style="left:882px;top:563px;width:1px;height:24px;background:#e0e0e0"></div>
<div class="a" style="left:972px;top:563px;width:1px;height:24px;background:#e0e0e0"></div>
<div class="a" style="left:1072px;top:563px;width:1px;height:24px;background:#e0e0e0"></div>
<div class="t z" style="left:487px;top:565px">文件名</div>
<svg style="left:530px;top:571px" width="10" height="7" viewBox="0 0 10 7"><path d="M0.8 6L5 1.6L9.2 6" fill="none" stroke="#9a9a9a" stroke-width="1"/></svg>
<div class="t c z" style="left:593px;width:75px;top:565px">大小</div>
<div class="t c z" style="left:669px;width:78px;top:565px">类型</div>
<div class="t c z" style="left:748px;width:134px;top:565px">修改时间</div>
<div class="t c z" style="left:883px;width:89px;top:565px">权限</div>
<div class="t c z" style="left:973px;width:99px;top:565px">用户/用户组</div>
<div class="a" id="fclip" style="left:0;top:0;width:1330px;height:785px;overflow:hidden">
<svg style="left:439px;top:590px" width="13" height="16" viewBox="0 0 13 16"><path d="M0.5 0.5H10.2V15.5H0.5Z" fill="#fbdb7c" stroke="#f1c74f"/><path d="M10.2 9.6H12.5V15.5H10.2Z" fill="#fde9a4" stroke="#f1c74f"/></svg>
<div id="fn0" class="ft fn" style="left:457.5px;top:588.2px">.ssh</div>
<div id="ftp0" class="ft ftp" style="left:676px;top:588.2px"><i>文件夹</i></div>
<div id="fd0" class="ft fd" style="left:756px;top:588.2px">2024/05/31 00:26</div>
<div id="fp0" class="ft fp" style="left:891px;top:588.2px">drwx------</div>
<div id="fu0" class="ft fu" style="left:981px;top:588.2px">root/root</div>
<div class="frow" style="top:608px;background:#f5f5f5"></div>
<svg style="left:439px;top:611.3px" width="12" height="14" viewBox="0 0 12 14"><path d="M0.5 0.5H7.8L10.6 3.2V13.4H0.5Z" fill="#f5f6f9"/><path d="M0.6 0.3V13.4" stroke="#8e8e8e" fill="none"/><path d="M0.2 13.2H11" stroke="#808080" fill="none"/><path d="M10.6 3V13" stroke="#bdbdbd" fill="none"/><path d="M1 0.6H7.8" stroke="#e3e3e3" fill="none"/><path d="M7.6 0.4L10.8 3.4" stroke="#c4c4c4" fill="none"/></svg>
<div id="fn1" class="ft fn" style="left:457.5px;top:608.2px">.bash_history</div>
<div id="fs1" class="ft r fs" style="left:595px;width:70.5px;top:608.2px">501 B</div>
<div id="ftp1" class="ft ftp" style="left:676px;top:608.2px">BASH_HI...</div>
<div id="fd1" class="ft fd" style="left:756px;top:608.2px">2024/05/31 15:36</div>
<div id="fp1" class="ft fp" style="left:891px;top:608.2px">-rw-------</div>
<div id="fu1" class="ft fu" style="left:981px;top:608.2px">root/root</div>
<svg style="left:439px;top:631.3px" width="12" height="14" viewBox="0 0 12 14"><path d="M0.5 0.5H7.8L10.6 3.2V13.4H0.5Z" fill="#f5f6f9"/><path d="M0.6 0.3V13.4" stroke="#8e8e8e" fill="none"/><path d="M0.2 13.2H11" stroke="#808080" fill="none"/><path d="M10.6 3V13" stroke="#bdbdbd" fill="none"/><path d="M1 0.6H7.8" stroke="#e3e3e3" fill="none"/><path d="M7.6 0.4L10.8 3.4" stroke="#c4c4c4" fill="none"/></svg>
<div id="fn2" class="ft fn" style="left:457.5px;top:628.2px">.bash_logout</div>
<div id="fs2" class="ft r fs" style="left:595px;width:70.5px;top:628.2px">18 B</div>
<div id="ftp2" class="ft ftp" style="left:676px;top:628.2px">BASH_LO...</div>
<div id="fd2" class="ft fd" style="left:756px;top:628.2px">2013/12/29 10:26</div>
<div id="fp2" class="ft fp" style="left:891px;top:628.2px">-rw-r--r--</div>
<div id="fu2" class="ft fu" style="left:981px;top:628.2px">root/root</div>
<div class="frow" style="top:648px;background:#f5f5f5"></div>
<svg style="left:439px;top:651.3px" width="12" height="14" viewBox="0 0 12 14"><path d="M0.5 0.5H7.8L10.6 3.2V13.4H0.5Z" fill="#f5f6f9"/><path d="M0.6 0.3V13.4" stroke="#8e8e8e" fill="none"/><path d="M0.2 13.2H11" stroke="#808080" fill="none"/><path d="M10.6 3V13" stroke="#bdbdbd" fill="none"/><path d="M1 0.6H7.8" stroke="#e3e3e3" fill="none"/><path d="M7.6 0.4L10.8 3.4" stroke="#c4c4c4" fill="none"/></svg>
<div id="fn3" class="ft fn" style="left:457.5px;top:648.2px">.bash_profile</div>
<div id="fs3" class="ft r fs" style="left:595px;width:70.5px;top:648.2px">176 B</div>
<div id="ftp3" class="ft ftp" style="left:676px;top:648.2px">BASH_PR...</div>
<div id="fd3" class="ft fd" style="left:756px;top:648.2px">2013/12/29 10:26</div>
<div id="fp3" class="ft fp" style="left:891px;top:648.2px">-rw-r--r--</div>
<div id="fu3" class="ft fu" style="left:981px;top:648.2px">root/root</div>
<svg style="left:439px;top:671.3px" width="12" height="14" viewBox="0 0 12 14"><path d="M0.5 0.5H7.8L10.6 3.2V13.4H0.5Z" fill="#f5f6f9"/><path d="M0.6 0.3V13.4" stroke="#8e8e8e" fill="none"/><path d="M0.2 13.2H11" stroke="#808080" fill="none"/><path d="M10.6 3V13" stroke="#bdbdbd" fill="none"/><path d="M1 0.6H7.8" stroke="#e3e3e3" fill="none"/><path d="M7.6 0.4L10.8 3.4" stroke="#c4c4c4" fill="none"/></svg>
<div id="fn4" class="ft fn" style="left:457.5px;top:668.2px">.bashrc</div>
<div id="fs4" class="ft r fs" style="left:595px;width:70.5px;top:668.2px">176 B</div>
<div id="ftp4" class="ft ftp" style="left:676px;top:668.2px">BASHRC ...</div>
<div id="fd4" class="ft fd" style="left:756px;top:668.2px">2013/12/29 10:26</div>
<div id="fp4" class="ft fp" style="left:891px;top:668.2px">-rw-r--r--</div>
<div id="fu4" class="ft fu" style="left:981px;top:668.2px">root/root</div>
<div class="frow" style="top:688px;background:#f5f5f5"></div>
<svg style="left:439px;top:691.3px" width="12" height="14" viewBox="0 0 12 14"><path d="M0.5 0.5H7.8L10.6 3.2V13.4H0.5Z" fill="#f5f6f9"/><path d="M0.6 0.3V13.4" stroke="#8e8e8e" fill="none"/><path d="M0.2 13.2H11" stroke="#808080" fill="none"/><path d="M10.6 3V13" stroke="#bdbdbd" fill="none"/><path d="M1 0.6H7.8" stroke="#e3e3e3" fill="none"/><path d="M7.6 0.4L10.8 3.4" stroke="#c4c4c4" fill="none"/></svg>
<div id="fn5" class="ft fn" style="left:457.5px;top:688.2px">.cshrc</div>
<div id="fs5" class="ft r fs" style="left:595px;width:70.5px;top:688.2px">100 B</div>
<div id="ftp5" class="ft ftp" style="left:676px;top:688.2px">CSHRC <i>文</i>...</div>
<div id="fd5" class="ft fd" style="left:756px;top:688.2px">2013/12/29 10:26</div>
<div id="fp5" class="ft fp" style="left:891px;top:688.2px">-rw-r--r--</div>
<div id="fu5" class="ft fu" style="left:981px;top:688.2px">root/root</div>
<svg style="left:439px;top:711.3px" width="12" height="14" viewBox="0 0 12 14"><path d="M0.5 0.5H7.8L10.6 3.2V13.4H0.5Z" fill="#f5f6f9"/><path d="M0.6 0.3V13.4" stroke="#8e8e8e" fill="none"/><path d="M0.2 13.2H11" stroke="#808080" fill="none"/><path d="M10.6 3V13" stroke="#bdbdbd" fill="none"/><path d="M1 0.6H7.8" stroke="#e3e3e3" fill="none"/><path d="M7.6 0.4L10.8 3.4" stroke="#c4c4c4" fill="none"/></svg>
<div id="fn6" class="ft fn" style="left:457.5px;top:708.2px">.tcshrc</div>
<div id="fs6" class="ft r fs" style="left:595px;width:70.5px;top:708.2px">129 B</div>
<div id="ftp6" class="ft ftp" style="left:676px;top:708.2px">TCSHRC ...</div>
<div id="fd6" class="ft fd" style="left:756px;top:708.2px">2013/12/29 10:26</div>
<div id="fp6" class="ft fp" style="left:891px;top:708.2px">-rw-r--r--</div>
<div id="fu6" class="ft fu" style="left:981px;top:708.2px">root/root</div>
<div class="frow" style="top:728px;background:#f5f5f5"></div>
<svg style="left:439px;top:731.3px" width="12" height="14" viewBox="0 0 12 14"><path d="M0.5 0.5H7.8L10.6 3.2V13.4H0.5Z" fill="#f5f6f9"/><path d="M0.6 0.3V13.4" stroke="#8e8e8e" fill="none"/><path d="M0.2 13.2H11" stroke="#808080" fill="none"/><path d="M10.6 3V13" stroke="#bdbdbd" fill="none"/><path d="M1 0.6H7.8" stroke="#e3e3e3" fill="none"/><path d="M7.6 0.4L10.8 3.4" stroke="#c4c4c4" fill="none"/></svg>
<div id="fn7" class="ft fn" style="left:457.5px;top:728.2px">anaconda-ks.cfg</div>
<div id="fs7" class="ft r fs" style="left:595px;width:70.5px;top:728.2px">6.8 KB</div>
<div id="ftp7" class="ft ftp" style="left:676px;top:728.2px">CFG <i>文件</i></div>
<div id="fd7" class="ft fd" style="left:756px;top:728.2px">2018/12/05 08:19</div>
<div id="fp7" class="ft fp" style="left:891px;top:728.2px">-rw-------</div>
<div id="fu7" class="ft fu" style="left:981px;top:728.2px">root/root</div>
<svg style="left:439px;top:751.3px" width="12" height="14" viewBox="0 0 12 14"><path d="M0.5 0.5H7.8L10.6 3.2V13.4H0.5Z" fill="#f5f6f9"/><path d="M0.6 0.3V13.4" stroke="#8e8e8e" fill="none"/><path d="M0.2 13.2H11" stroke="#808080" fill="none"/><path d="M10.6 3V13" stroke="#bdbdbd" fill="none"/><path d="M1 0.6H7.8" stroke="#e3e3e3" fill="none"/><path d="M7.6 0.4L10.8 3.4" stroke="#c4c4c4" fill="none"/></svg>
<div id="fn8" class="ft fn" style="left:457.5px;top:748.2px">auto_disk.sh</div>
<div id="fs8" class="ft r fs" style="left:595px;width:70.5px;top:748.2px">7.5 KB</div>
<div id="ftp8" class="ft ftp" style="left:676px;top:748.2px">SH <i>文件</i></div>
<div id="fd8" class="ft fd" style="left:756px;top:748.2px">2020/01/20 09:36</div>
<div id="fp8" class="ft fp" style="left:891px;top:748.2px">-rw-r--r--</div>
<div id="fu8" class="ft fu" style="left:981px;top:748.2px">root/root</div>
<div class="frow" style="top:768px;background:#f5f5f5"></div>
<svg style="left:439px;top:771.3px" width="12" height="14" viewBox="0 0 12 14"><path d="M0.5 0.5H7.8L10.6 3.2V13.4H0.5Z" fill="#f5f6f9"/><path d="M0.6 0.3V13.4" stroke="#8e8e8e" fill="none"/><path d="M0.2 13.2H11" stroke="#808080" fill="none"/><path d="M10.6 3V13" stroke="#bdbdbd" fill="none"/><path d="M1 0.6H7.8" stroke="#e3e3e3" fill="none"/><path d="M7.6 0.4L10.8 3.4" stroke="#c4c4c4" fill="none"/></svg>
<div id="fn9" class="ft fn" style="left:457.5px;top:768.2px">original-ks.cfg</div>
<div id="fs9" class="ft r fs" style="left:595px;width:70.5px;top:768.2px">6.4 KB</div>
<div id="ftp9" class="ft ftp" style="left:676px;top:768.2px">CFG <i>文件</i></div>
<div id="fd9" class="ft fd" style="left:756px;top:768.2px">2018/12/05 08:19</div>
<div id="fp9" class="ft fp" style="left:891px;top:768.2px">-rw-------</div>
<div id="fu9" class="ft fu" style="left:981px;top:768.2px">root/root</div>
</div>
<div class="a" style="left:1317px;top:563px;width:10px;height:222px;background:#f4f4f4"></div>
<div class="a" style="left:1317px;top:563px;width:10px;height:218px;background:#dcdcdc"></div>
<div class="a" style="left:432px;top:785px;width:896px;height:1px;background:#c9c9c9"></div>
<div class="a" style="left:248px;top:786px;width:1080px;height:2px;background:#fff"></div>
<!-- splitter dots -->
<svg style="left:243px;top:404px" width="3" height="14" viewBox="0 0 3 14"><g fill="#b4b4b4"><circle cx="1.5" cy="1.5" r="1.5"/><circle cx="1.5" cy="6.5" r="1.5"/><circle cx="1.5" cy="11.5" r="1.5"/></g></svg>
<!-- frame overlay edges -->
<div class="a" style="left:0;top:788px;width:1330px;height:1px;background:#686868"></div>
<div class="a" style="left:0;top:789px;width:1330px;height:1px;background:#d4d4d4"></div>
<div class="a" style="left:1328px;top:0;width:1px;height:790px;background:#686868"></div>
<div class="a" style="left:1329px;top:0;width:1px;height:790px;background:#d8d8d8"></div>

</body>
</html>
